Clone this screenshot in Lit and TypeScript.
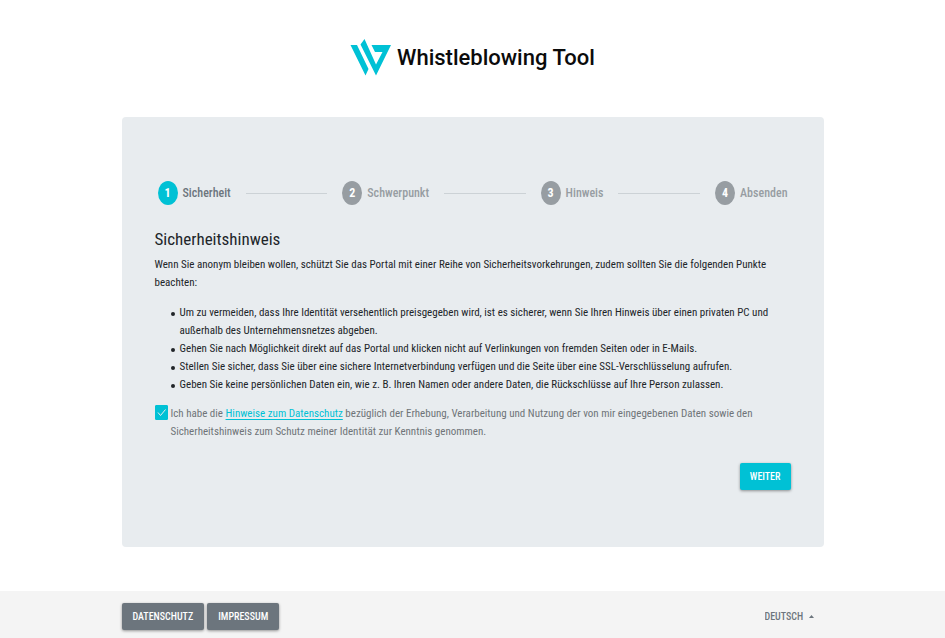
import { LitElement, html, css } from "lit";
import { customElement, state } from "lit/decorators.js";

const STEPS = ["Sicherheit", "Schwerpunkt", "Hinweis", "Absenden"];

const HINTS = [
  "Um zu vermeiden, dass Ihre Identität versehentlich preisgegeben wird, ist es sicherer, wenn Sie Ihren Hinweis über einen privaten PC und außerhalb des Unternehmensnetzes abgeben.",
  "Gehen Sie nach Möglichkeit direkt auf das Portal und klicken nicht auf Verlinkungen von fremden Seiten oder in E-Mails.",
  "Stellen Sie sicher, dass Sie über eine sichere Internetverbindung verfügen und die Seite über eine SSL-Verschlüsselung aufrufen.",
  "Geben Sie keine persönlichen Daten ein, wie z. B. Ihren Namen oder andere Daten, die Rückschlüsse auf Ihre Person zulassen.",
];

@customElement("app-root")
export class AppRoot extends LitElement {
  @state() private accepted = true;

  static styles = css`
    :host {
      display: flex;
      flex-direction: column;
      min-height: 100vh;
      background: #fff;
      color: #212529;
      font-family: "Roboto Condensed", Roboto, sans-serif;
      font-size: 11px;
      line-height: 18px;
    }
    * {
      box-sizing: border-box;
    }
    .container {
      width: 100%;
      max-width: 702px;
      margin: 0 auto;
    }
    .header {
      display: flex;
      justify-content: center;
      align-items: center;
      gap: 6px;
      padding: 38px 0 40px;
    }
    .logo {
      width: 41px;
      height: 39px;
    }
    .brand {
      color: #0b0b0b;
      font-family: Roboto, sans-serif;
      font-size: 22px;
      font-weight: 500;
      line-height: 32px;
    }
    .panel {
      padding: 64px 33px 57px;
      border-radius: 4px;
      background: #e8ecef;
    }
    .steps {
      display: flex;
      align-items: center;
      gap: 15px;
      margin: 0;
      padding: 0 3px;
      list-style: none;
      font-size: 12px;
    }
    .step {
      display: flex;
      align-items: center;
      gap: 5px;
      color: #979da2;
      font-weight: 500;
    }
    .step.active {
      color: #6c757d;
    }
    .number {
      display: grid;
      place-items: center;
      width: 20px;
      height: 24px;
      border-radius: 50%;
      background: #979da2;
      color: #fff;
      font-weight: 700;
    }
    .active .number {
      background: #00c1d5;
    }
    .line {
      flex: 1;
      height: 1px;
      background: #ccd2d6;
    }
    h1 {
      margin: 22px 0 5px;
      font-size: 17px;
      font-weight: 400;
      line-height: 24px;
    }
    p {
      margin: 0 0 12px;
    }
    .hints {
      margin: 0 0 11px;
      padding-left: 16px;
      list-style: none;
    }
    .hints li {
      display: flex;
      gap: 5px;
    }
    .hints li::before {
      content: "";
      flex: none;
      width: 4px;
      height: 4px;
      margin-top: 8px;
      border-radius: 50%;
      background: currentColor;
    }
    .consent {
      display: flex;
      align-items: flex-start;
      gap: 3px;
      color: #6f7478;
    }
    .box {
      display: grid;
      flex: none;
    }
    .box input,
    .tick {
      grid-area: 1 / 1;
      width: 13px;
      height: 15px;
      margin: 0;
    }
    .box input {
      appearance: none;
      border: 1px solid #00c1d5;
      border-radius: 1px;
    }
    .box input:checked {
      background: #00c1d5;
    }
    .tick {
      pointer-events: none;
    }
    .consent a {
      color: #00c1d5;
      text-decoration: underline;
      text-underline-offset: 2px;
    }
    .actions {
      display: flex;
      justify-content: flex-end;
      margin-top: 22px;
    }
    .button {
      display: inline-block;
      padding: 5px 10px 4px;
      border: 0;
      border-radius: 2px;
      background: #6c757d;
      box-shadow: 0 1px 3px rgb(0 0 0 / 40%);
      color: #fff;
      font: 500 10px/18px "Roboto Condensed", Roboto, sans-serif;
      text-decoration: none;
      text-transform: uppercase;
    }
    .primary {
      background: #00c1d5;
    }
    .footer {
      margin-top: auto;
      padding: 12px 0 8px;
      background: #f4f4f4;
    }
    .bar {
      display: flex;
      align-items: center;
      justify-content: space-between;
    }
    .links {
      display: flex;
      gap: 3px;
    }
    .links .button {
      padding-inline: 11px;
    }
    .language {
      display: flex;
      align-items: center;
      gap: 5px;
      padding-right: 10px;
      color: #6c757d;
    }
    .language select {
      appearance: none;
      padding: 0;
      border: 0;
      background: none;
      color: inherit;
      font: 500 10px/18px "Roboto Condensed", Roboto, sans-serif;
      text-transform: uppercase;
    }
    .caret {
      width: 5px;
      height: 3px;
    }
  `;

  private toggle(event: Event) {
    this.accepted = (event.target as HTMLInputElement).checked;
  }

  render() {
    return html`
      <header class="header">
        <svg class="logo" viewBox="0 0 41 39" aria-hidden="true">
          <path
            fill="#00c1d5"
            d="M0.500 7H7L18.500 31L15.500 37.500ZM10.500 6.500L14.500 1L26 26.500L32.500 14H25L21.500 7H41L26 37.500Z"
          />
        </svg>
        <span class="brand">Whistleblowing Tool</span>
      </header>

      <main class="container panel">
        <ol class="steps">
          ${STEPS.map(
            (name, i) => html`
              ${i ? html`<li class="line" role="presentation"></li>` : ""}
              <li class="step ${i === 0 ? "active" : ""}">
                <span class="number">${i + 1}</span>${name}
              </li>
            `
          )}
        </ol>

        <h1>Sicherheitshinweis</h1>
        <p>
          Wenn Sie anonym bleiben wollen, schützt Sie das Portal mit einer Reihe von
          Sicherheitsvorkehrungen, zudem sollten Sie die folgenden Punkte beachten:
        </p>
        <ul class="hints">
          ${HINTS.map((hint) => html`<li>${hint}</li>`)}
        </ul>

        <div class="consent">
          <span class="box">
            <input id="consent" type="checkbox" .checked=${this.accepted} @change=${this.toggle} />
            <svg class="tick" viewBox="0 0 13 15" aria-hidden="true">
              <path d="M3 7.500L5.500 10.500L10.500 4.500" fill="none" stroke="#e8ecef" />
            </svg>
          </span>
          <label for="consent"
            >Ich habe die <a href="#datenschutz">Hinweise zum Datenschutz</a> bezüglich der
            Erhebung, Verarbeitung und Nutzung der von mir eingegebenen Daten sowie den
            Sicherheitshinweis zum Schutz meiner Identität zur Kenntnis genommen.</label
          >
        </div>

        <div class="actions">
          <button class="button primary" type="button">Weiter</button>
        </div>
      </main>

      <footer class="footer">
        <div class="container bar">
          <nav class="links">
            <a class="button" href="#datenschutz">Datenschutz</a>
            <a class="button" href="#impressum">Impressum</a>
          </nav>
          <div class="language">
            <select aria-label="Sprache">
              <option>Deutsch</option>
            </select>
            <svg class="caret" viewBox="0 0 5 3" aria-hidden="true">
              <path d="M0 3L2.500 0L5 3Z" fill="currentColor" />
            </svg>
          </div>
        </div>
      </footer>
    `;
  }
}
